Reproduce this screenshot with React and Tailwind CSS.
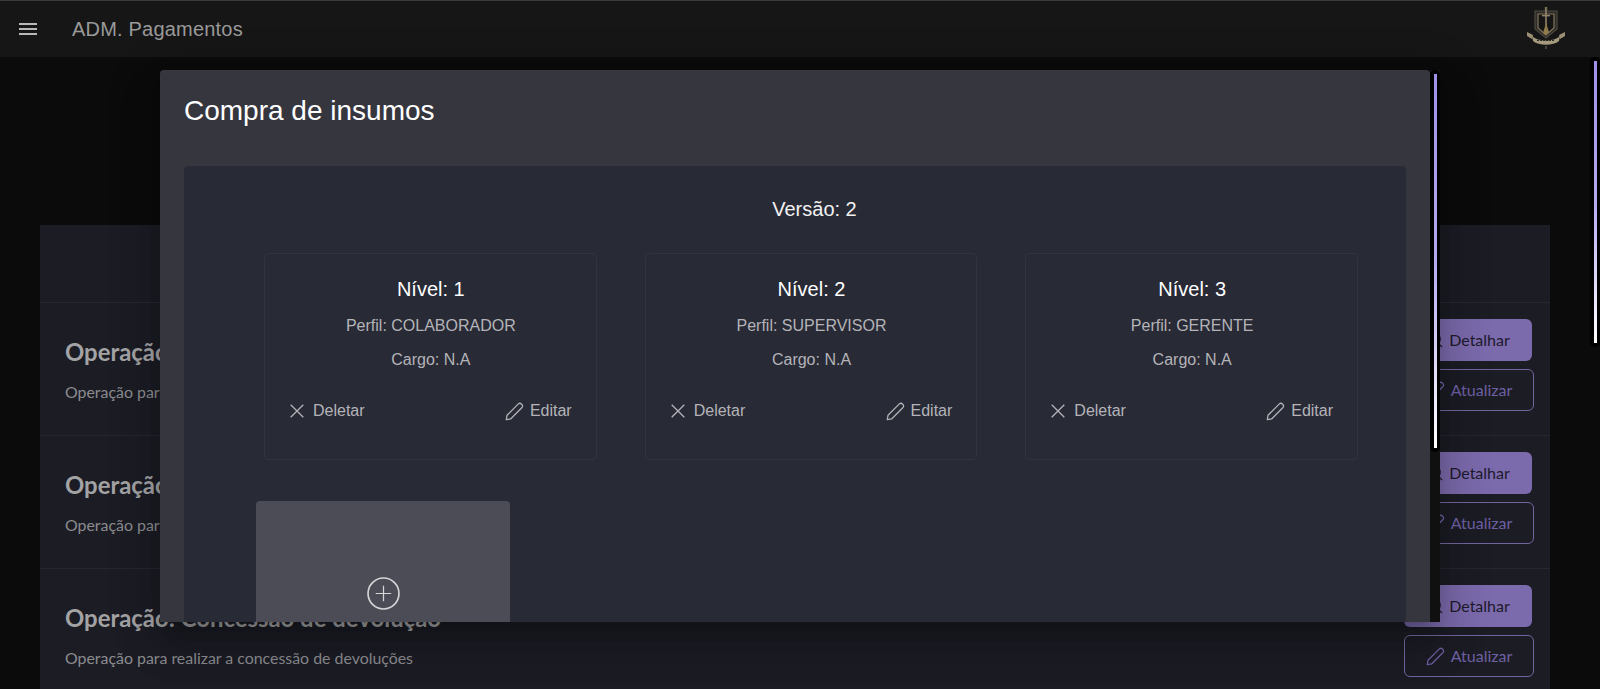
import { Search } from 'lucide-react'

function PencilIcon({ className }) {
  return (
    <svg viewBox="0 0 18 18" fill="none" stroke="currentColor" strokeWidth="1.2" className={className}>
      <path d="M1.2 16.8 L1.9 12.6 L12.4 2 C13.3 1.1 14.8 1.1 15.8 2.1 C16.8 3.1 16.8 4.6 15.9 5.5 L5.3 16.1 Z" strokeLinejoin="round" />
    </svg>
  )
}

function CrossIcon() {
  return (
    <svg viewBox="0 0 14 14" fill="none" stroke="currentColor" strokeWidth="1.3" className="w-[14px] h-[14px]">
      <path d="M0.7 0.7 L13.3 13.3 M13.3 0.7 L0.7 13.3" />
    </svg>
  )
}

function Logo() {
  return (
    <svg viewBox="0 0 40 42" className="w-10 h-[42px]">
      <rect x="18.8" y="0" width="2.4" height="6" fill="#7a6e56" />
      <path d="M9 4 H31 V22 L20 31 L9 22 Z" fill="#2b2b29" stroke="#4f4a3e" strokeWidth="1.2" />
      <path d="M12 7 H28 V21 L20 28 L12 21 Z" fill="#151515" stroke="#85755a" strokeWidth="1.2" />
      <rect x="19.2" y="3" width="1.6" height="16" fill="#8f836a" />
      <rect x="16" y="8" width="8" height="1.4" fill="#8f836a" />
      <path d="M17 26 L20 16 L23 25 L20 28 Z" fill="#8f7a4c" />
      <path d="M1 25 L7 28 L6 32 L1 29 Z M39 25 L33 28 L34 32 L39 29 Z" fill="#9c8f74" />
      <path d="M6 29 C12 35 28 35 34 29 L33 34 C27 39 13 39 7 34 Z" fill="#a59a7e" />
      <path d="M11 33.4 H29" stroke="#2b2b29" strokeWidth="1.4" strokeDasharray="2 1" />
      <rect x="19.4" y="39" width="1.2" height="3" fill="#6a6250" />
    </svg>
  )
}

const rows = [
  { title: 'Operação: Compra de insumos', text: 'Operação para realizar a compra de insumos' },
  { title: 'Operação: Concessão de crédito', text: 'Operação para realizar a concessão de crédito' },
  { title: 'Operação: Concessão de devolução', text: 'Operação para realizar a concessão de devoluções' },
]

const levels = [
  { nivel: 1, perfil: 'COLABORADOR' },
  { nivel: 2, perfil: 'SUPERVISOR' },
  { nivel: 3, perfil: 'GERENTE' },
]

function Row({ title, text }) {
  return (
    <div className="h-[133px] border-t border-[#262731] flex justify-between pl-[25px] pr-4 pt-4 font-['Lato',sans-serif]">
      <div className="pt-[15px]">
        <h3 className="text-[23.9px] leading-[35px] font-bold text-[#a3a3a5]">{title}</h3>
        <p className="mt-[11px] text-[15.9px] leading-[24px] text-[#8c8c90]">{text}</p>
      </div>
      <div className="flex flex-col gap-2 w-[130px]">
        <button className="h-[42px] w-[128px] rounded-md bg-[#7b6aac] text-[#1e1a2c] text-[16px] flex items-center justify-center gap-[5px]">
          <Search size={18} strokeWidth={1.5} /> Detalhar
        </button>
        <button className="h-[42px] rounded-md border border-[#75659f] text-[#6f60a3] text-[16px] flex items-center justify-center gap-[6px]">
          <PencilIcon className="w-[19px] h-[19px]" /> Atualizar
        </button>
      </div>
    </div>
  )
}

function LevelCard({ nivel, perfil }) {
  return (
    <div className="w-[333px] h-[207px] rounded-sm border border-[#32333e] pl-[25px] pr-6 pt-[21px] text-center">
      <h4 className="text-[20px] leading-[28px] text-white">Nível: {nivel}</h4>
      <p className="mt-[11px] text-[16px] leading-6 text-[#b4b4b8]">Perfil: {perfil}</p>
      <p className="mt-[10px] text-[16px] leading-6 text-[#b4b4b8]">Cargo: N.A</p>
      <div className="mt-[27px] flex justify-between text-[16px] leading-6 text-[#b4b4b8]">
        <span className="flex items-center gap-[9px]">
          <CrossIcon /> Deletar
        </span>
        <span className="flex items-center gap-[6px]">
          <PencilIcon className="w-[19px] h-[19px]" /> Editar
        </span>
      </div>
    </div>
  )
}

export default function App() {
  return (
    <div className="relative h-[689px] overflow-hidden bg-[#0b0b0b] font-['Liberation_Sans',Arial,sans-serif]">
      <header className="h-[57px] border-t border-[#3a3a3a] bg-[#161616] flex items-center pl-[19px] pr-[34px]">
        <svg viewBox="0 0 18 12" className="w-[18px] h-3 text-[#b8b8b8]" fill="currentColor">
          <rect width="18" height="2" />
          <rect y="5" width="18" height="2" />
          <rect y="10" width="18" height="2" />
        </svg>
        <span className="ml-[35px] text-[20px] tracking-[0.2px] text-[#9a9a9a]">ADM. Pagamentos</span>
        <div className="ml-auto -mt-0.5"><Logo /></div>
      </header>

      <main className="mt-[168px] ml-10 mr-[50px] bg-[#1b1c24]">
        <div className="h-[77px]" />
        {rows.map((r) => <Row key={r.title} {...r} />)}
      </main>

      {/* modal */}
      <div className="absolute left-[160px] top-[70px] w-[1280px] h-[552px] flex shadow-[0_11px_15px_-7px_rgba(0,0,0,.2),0_24px_38px_3px_rgba(0,0,0,.14),0_9px_46px_8px_rgba(0,0,0,.12)]">
        <div className="w-[1270px] bg-[#36363f] rounded-t-sm overflow-hidden px-6">
          <h2 className="h-[96px] pt-[23px] text-[28px] leading-[36px] text-white">Compra de insumos</h2>
          <div className="h-[500px] rounded bg-[#282a36] pl-20 pr-12 pt-[28px]">
            <p className="text-center text-[20px] leading-[30px] text-[#f2f2f2] pl-[7px]">Versão: 2</p>
            <div className="mt-[29px] flex gap-12">
              {levels.map((l) => <LevelCard key={l.nivel} {...l} />)}
            </div>
            <div className="mt-[41px] -ml-2 w-[254px] h-[200px] rounded-sm bg-[#4b4c55] flex justify-center pt-[76px]">
              <svg viewBox="0 0 32 32" className="w-[33px] h-[33px] text-[#d5d5d8]" fill="none" stroke="currentColor">
                <circle cx="16" cy="16" r="15" strokeWidth="1.6" />
                <path d="M16 8.5 V23.5 M8.5 16 H23.5" strokeWidth="1.2" />
              </svg>
            </div>
          </div>
        </div>
        {/* modal scrollbar */}
        <div className="w-2.5 bg-[#101010]">
          <div className="h-[382px] rounded-md bg-black flex justify-center pt-1">
            <div className="h-[374px] w-[3px] bg-gradient-to-b from-[#a08fe8] via-[#b4a8ee] to-white" />
          </div>
        </div>
      </div>

      {/* page scrollbar */}
      <div className="absolute right-0 top-[57px] bottom-0 w-2.5 bg-[#0b0b0b]">
        <div className="h-[290px] rounded-md bg-black flex justify-center pt-1">
          <div className="h-[282px] w-[3px] bg-gradient-to-b from-[#a08fe8] via-[#b4a8ee] to-white" />
        </div>
      </div>
    </div>
  )
}
